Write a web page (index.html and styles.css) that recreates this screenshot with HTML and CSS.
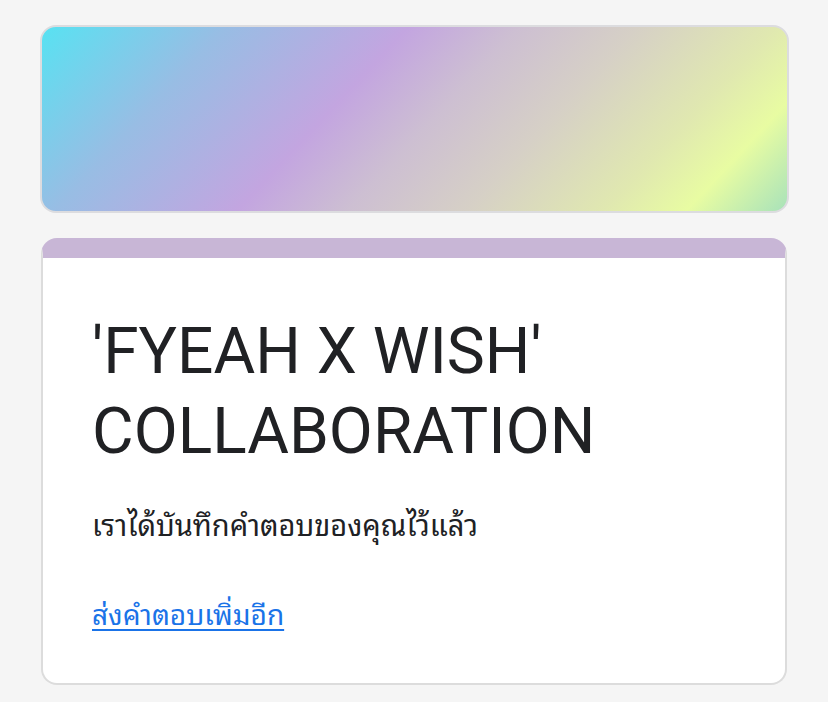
FILE: index.html
```html
<!DOCTYPE html>
<html lang="th">
<head>
<meta charset="utf-8">
<title>'FYEAH X WISH' COLLABORATION</title>
<link rel="stylesheet" href="styles.css">
</head>
<body>
<div class="page">
  <div class="banner"></div>
  <div class="card">
    <div class="content">
      <h1 class="title">'FYEAH X WISH' COLLABORATION</h1>
      <p class="message">เราได้บันทึกคำตอบของคุณไว้แล้ว</p>
      <a class="link" href="#">ส่งคำตอบเพิ่มอีก</a>
    </div>
  </div>
</div>
</body>
</html>
```

FILE: styles.css
```css
html, body {
  margin: 0;
  padding: 0;
  background: #f5f5f5;
}

body {
  font-family: "Noto Sans Thai Looped", Roboto, "Noto Sans Thai", sans-serif;
  color: #202124;
}

.page {
  display: flex;
  flex-direction: column;
  gap: 25px;
  padding: 25px 0 0 40px;
}

.banner {
  box-sizing: border-box;
  width: 749px;
  height: 188px;
  border: 2px solid #dcdcdf;
  border-radius: 16px;
  background: linear-gradient(133deg,
    #58e2f2 0%,
    #98bde4 20%,
    #c3a5e0 40%,
    #cdbfd2 52%,
    #d6d0c6 65%,
    #e0e8b0 80%,
    #e8fca2 89%,
    #a8e2ba 100%);
}

.card {
  box-sizing: border-box;
  width: 746px;
  margin-left: 1px;
  height: 447px;
  background: #ffffff;
  border: 2px solid #dcdcdc;
  border-top: 20px solid #c8b6d6;
  border-radius: 16px;
}

.content {
  padding: 54px 48px 0 49px;
}

.title {
  margin: 0;
  font-family: Roboto, sans-serif;
  font-weight: 400;
  font-size: 64px;
  line-height: 80px;
  color: #202124;
}

.message {
  margin: 31px 0 0 0;
  font-size: 29px;
  line-height: 40px;
  color: #202124;
}

.link {
  display: inline-block;
  margin-top: 50px;
  font-size: 28px;
  line-height: 40px;
  color: #1a73e8;
  text-decoration: underline;
  text-underline-offset: 4px;
  text-decoration-thickness: 2px;
}
```
